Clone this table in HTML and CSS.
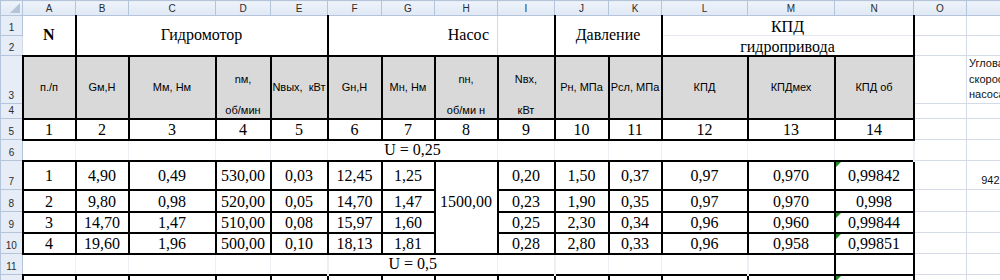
FILE: index.html
```html
<!DOCTYPE html>
<html lang="ru">
<head>
<meta charset="utf-8">
<title>Гидропривод</title>
<link rel="stylesheet" href="styles.css">
</head>
<body>
<table class="sheet">
  <colgroup>
    <col class="w22"><col class="w53"><col class="w53"><col class="w87"><col class="w55"><col class="w57">
    <col class="w54"><col class="w53"><col class="w63"><col class="w57"><col class="w54"><col class="w53">
    <col class="w86"><col class="w87"><col class="w79"><col class="w53"><col class="w80">
  </colgroup>
  <tr class="h15">
    <th class="corner"></th>
    <th class="ch">A</th><th class="ch">B</th><th class="ch">C</th><th class="ch">D</th><th class="ch">E</th>
    <th class="ch">F</th><th class="ch">G</th><th class="ch">H</th><th class="ch">I</th><th class="ch">J</th>
    <th class="ch">K</th><th class="ch">L</th><th class="ch">M</th><th class="ch">N</th><th class="ch">O</th><th class="ch pcol">P</th>
  </tr>
  <tr class="h20">
    <th class="rh">1</th>
    <td class="title bold br bb" rowspan="2">N</td>
    <td class="title br bb" colspan="4" rowspan="2">Гидромотор</td>
    <td class="title right bb" colspan="3" rowspan="2">Насос</td>
    <td class="br bb" rowspan="2"></td>
    <td class="title br bb" colspan="2" rowspan="2">Давление</td>
    <td class="vb br soft" colspan="3">КПД</td>
    <td></td><td></td>
  </tr>
  <tr class="h20">
    <th class="rh">2</th>
    <td class="vb br bb" colspan="3">гидропривода</td>
    <td></td><td></td>
  </tr>
  <tr class="h48">
    <th class="rh">3</th>
    <td class="lbl b" rowspan="2">п./п</td>
    <td class="lbl b" rowspan="2">Gм,Н</td>
    <td class="lbl b" rowspan="2">Мм, Нм</td>
    <td class="lbl b sp" rowspan="2"><div class="two"><span>nм,</span><span>об/мин</span></div></td>
    <td class="lbl b" rowspan="2">Nвых,&nbsp; кВт</td>
    <td class="lbl b" rowspan="2">Gн,Н</td>
    <td class="lbl b" rowspan="2">Мн, Нм</td>
    <td class="lbl b sp" rowspan="2"><div class="two"><span>nн,</span><span>об/ми н</span></div></td>
    <td class="lbl b sp" rowspan="2"><div class="two"><span>Nвх,</span><span>кВт</span></div></td>
    <td class="lbl b" rowspan="2">Рн, МПа</td>
    <td class="lbl b" rowspan="2">Рсл, МПа</td>
    <td class="lbl b" rowspan="2">КПД</td>
    <td class="lbl b" rowspan="2">КПДмех</td>
    <td class="lbl b" rowspan="2">КПД об</td>
    <td></td>
    <td class="note">Угловая скорость насоса</td>
  </tr>
  <tr class="h15">
    <th class="rh">4</th>
    <td></td><td></td>
  </tr>
  <tr class="h21">
    <th class="rh">5</th>
    <td class="b num">1</td><td class="b num">2</td><td class="b num">3</td><td class="b num">4</td><td class="b num">5</td>
    <td class="b num">6</td><td class="b num">7</td><td class="b num">8</td><td class="b num">9</td><td class="b num">10</td>
    <td class="b num">11</td><td class="b num">12</td><td class="b num">13</td><td class="b num">14</td>
    <td></td><td></td>
  </tr>
  <tr class="h21">
    <th class="rh">6</th>
    <td class="f"></td><td class="f"></td><td class="f"></td><td class="f"></td><td class="f"></td>
    <td class="f" colspan="3">U = 0,25</td>
    <td class="f"></td><td class="f"></td><td class="f"></td><td class="f"></td><td class="f"></td><td class="f br"></td>
    <td></td><td></td>
  </tr>
  <tr class="h29">
    <th class="rh">7</th>
    <td class="b num">1</td><td class="b num">4,90</td><td class="b num">0,49</td><td class="b num">530,00</td><td class="b num">0,03</td>
    <td class="b num">12,45</td><td class="b num">1,25</td>
    <td class="b merged" rowspan="4">1500,00</td>
    <td class="b num">0,20</td><td class="b num">1,50</td><td class="b num">0,37</td>
    <td class="b num">0,97</td><td class="b num">0,970</td><td class="b num tri">0,99842</td>
    <td></td><td class="note vb">&nbsp;&nbsp;&nbsp;&nbsp;942,48</td>
  </tr>
  <tr class="h22">
    <th class="rh">8</th>
    <td class="b num">2</td><td class="b num">9,80</td><td class="b num">0,98</td><td class="b num">520,00</td><td class="b num">0,05</td>
    <td class="b num">14,70</td><td class="b num">1,47</td>
    <td class="b num">0,23</td><td class="b num">1,90</td><td class="b num">0,35</td>
    <td class="b num">0,97</td><td class="b num">0,970</td><td class="b num">0,998</td>
    <td></td><td></td>
  </tr>
  <tr class="h21">
    <th class="rh">9</th>
    <td class="b num">3</td><td class="b num">14,70</td><td class="b num">1,47</td><td class="b num">510,00</td><td class="b num">0,08</td>
    <td class="b num">15,97</td><td class="b num">1,60</td>
    <td class="b num">0,25</td><td class="b num">2,30</td><td class="b num">0,34</td>
    <td class="b num">0,96</td><td class="b num">0,960</td><td class="b num tri">0,99844</td>
    <td></td><td></td>
  </tr>
  <tr class="h21">
    <th class="rh">10</th>
    <td class="b num">4</td><td class="b num">19,60</td><td class="b num">1,96</td><td class="b num">500,00</td><td class="b num">0,10</td>
    <td class="b num">18,13</td><td class="b num">1,81</td>
    <td class="b num">0,28</td><td class="b num">2,80</td><td class="b num">0,33</td>
    <td class="b num">0,96</td><td class="b num">0,958</td><td class="b num tri">0,99851</td>
    <td></td><td></td>
  </tr>
  <tr class="h21">
    <th class="rh">11</th>
    <td class="f"></td><td class="f"></td><td class="f"></td><td class="f"></td><td class="f br"></td>
    <td class="f" colspan="3">U = 0,5</td>
    <td class="f br"></td>
    <td class="f"></td><td class="f"></td><td class="f br"></td>
    <td class="b"></td><td class="b"></td>
    <td></td><td></td>
  </tr>
  <tr class="h21">
    <th class="rh">12</th>
    <td class="b"></td><td class="b"></td><td class="b"></td><td class="b"></td><td class="b"></td>
    <td class="b"></td><td class="b"></td><td class="b"></td><td class="b"></td><td class="b"></td>
    <td class="b"></td><td class="b"></td><td class="b"></td><td class="b tri"></td>
    <td></td><td></td>
  </tr>
</table>
</body>
</html>
```

FILE: styles.css
```css
html, body {
  margin: 0;
  padding: 0;
  background: #ffffff;
  overflow: hidden;
}

body {
  width: 1000px;
  height: 280px;
}

.sheet {
  border-collapse: collapse;
  table-layout: fixed;
  width: 1046px;
  font-family: "Liberation Serif", "Times New Roman", serif;
  font-size: 16px;
  color: #000;
}

.w22 { width: 22px; }
.w53 { width: 53px; }
.w54 { width: 54px; }
.w55 { width: 55px; }
.w57 { width: 57px; }
.w63 { width: 63px; }
.w79 { width: 79px; }
.w80 { width: 80px; }
.w86 { width: 86px; }
.w87 { width: 87px; }

.h15 { height: 15px; }
.h20 { height: 20px; }
.h21 { height: 21px; }
.h22 { height: 22px; }
.h29 { height: 29px; }
.h48 { height: 48px; }

.sheet td,
.sheet th {
  border: 1px solid #d4dbe7;
  padding: 0;
  overflow: hidden;
  white-space: nowrap;
  text-align: center;
  vertical-align: middle;
  line-height: 16px;
}

/* column & row headers */
.sheet .ch,
.sheet .rh,
.sheet .corner {
  background: linear-gradient(#eef3fa, #dfe8f4);
  border: 1px solid #b3c4db;
  font-family: "Liberation Sans", Arial, sans-serif;
  font-size: 10px;
  font-weight: normal;
  color: #2b2b2b;
  line-height: 13px;
}

.sheet .rh {
  background: #e6edf7;
  vertical-align: bottom;
  padding-bottom: 1px;
}

.sheet .corner {
  position: relative;
}

.sheet .corner::after {
  content: "";
  position: absolute;
  right: 2px;
  bottom: 2px;
  border-left: 10px solid transparent;
  border-bottom: 10px solid #b4c3d8;
}

/* titles */
.title { vertical-align: middle; }
.bold { font-weight: bold; }
.sheet .right { text-align: right; padding-right: 8px; }
.sheet .vb { vertical-align: bottom; }
.sheet .soft { border-bottom-color: #e3e8f0; }

/* borders */
.sheet .b { border: 2px solid #000; }
.sheet .br { border-right: 2px solid #000; }
.sheet .bb { border-bottom: 2px solid #000; }
.sheet .f { border-color: #eceff4; }

/* grey labels */
.sheet .lbl {
  background: #d9d9d9;
  font-family: "Liberation Sans", Arial, sans-serif;
  font-size: 11px;
  line-height: 13px;
}

.sheet .sp { vertical-align: top; }

.two {
  height: 61px;
  box-sizing: border-box;
  padding: 16px 0 1px;
  display: flex;
  flex-direction: column;
  justify-content: space-between;
  align-items: center;
}

/* numbers */
.sheet .num {
  padding-top: 2px;
}

.sheet .merged {
  vertical-align: top;
  padding-top: 32px;
}

.sheet .tri { position: relative; }

.sheet .tri::before {
  content: "";
  position: absolute;
  left: 0;
  top: 0;
  border-top: 5px solid #1e8c1e;
  border-right: 5px solid transparent;
}

/* side note in column P */
.sheet .note {
  font-family: "Liberation Sans", Arial, sans-serif;
  font-size: 11px;
  line-height: 15.5px;
  text-align: left;
  vertical-align: top;
  white-space: normal;
  padding-left: 2px;
  color: #111;
}

.sheet .note.vb {
  vertical-align: bottom;
  white-space: nowrap;
  padding-bottom: 1px;
}
```
